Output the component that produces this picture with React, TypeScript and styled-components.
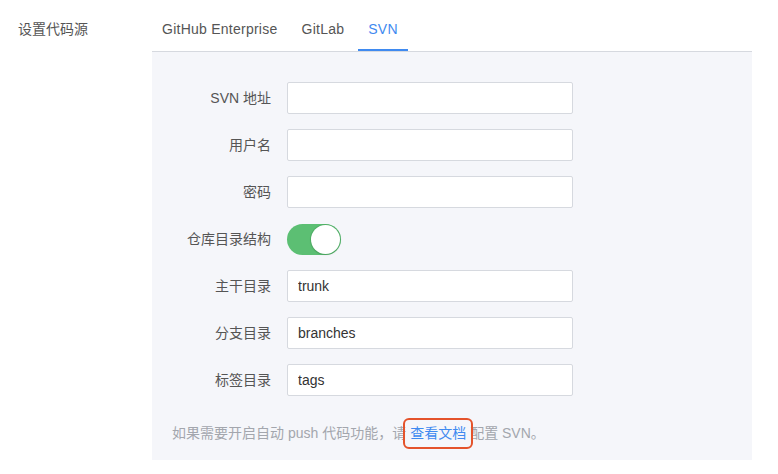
import React from 'react';
import styled, { createGlobalStyle } from 'styled-components';

const GlobalStyle = createGlobalStyle`
  body {
    margin: 0;
    background: #fff;
    font-family: 'Liberation Sans', 'Noto Sans CJK SC', sans-serif;
    font-size: 14px;
    color: #555;
  }
`;

const Page = styled.div`
  display: flex;
  width: 778px;
`;

const SideLabel = styled.div`
  width: 134px;
  padding: 9px 0 0 18px;
  line-height: 40px;
  color: #555;
`;

const Main = styled.div`
  width: 600px;
`;

const TabBar = styled.div`
  display: flex;
  padding-top: 9px;
  border-bottom: 1px solid #d6d9df;
`;

const Tab = styled.div<{ $active?: boolean }>`
  height: 42px;
  box-sizing: border-box;
  padding: 0 10px;
  margin-right: 4px;
  line-height: 40px;
  letter-spacing: 0.25px;
  color: ${(p) => (p.$active ? '#3f8af0' : '#555')};
  border-bottom: 2px solid ${(p) => (p.$active ? '#3f8af0' : 'transparent')};
`;

const Panel = styled.div`
  background: #f5f6fa;
  padding: 30px 20px 17px;
`;

const Form = styled.div`
  display: grid;
  grid-template-columns: 99px 286px;
  column-gap: 16px;
  row-gap: 15px;
`;

const Label = styled.label`
  height: 32px;
  line-height: 32px;
  text-align: right;
  color: #555;
  white-space: nowrap;
`;

const Input = styled.input`
  height: 32px;
  box-sizing: border-box;
  border: 1px solid #d6d9df;
  border-radius: 2px;
  background: #fff;
  padding: 0 10px;
  font: inherit;
  font-size: 14px;
  color: #333;
  outline: none;
`;

const Switch = styled.div<{ $on?: boolean }>`
  align-self: center;
  position: relative;
  width: 54px;
  height: 31px;
  border-radius: 16px;
  background: ${(p) => (p.$on ? '#5cbf73' : '#dcdfe6')};
`;

const Knob = styled.span`
  position: absolute;
  top: 1px;
  right: 1px;
  width: 29px;
  height: 29px;
  border-radius: 50%;
  background: #fff;
  box-shadow: 0 0 0 1px rgba(60, 150, 80, 0.35), 0 1px 2px rgba(0, 0, 0, 0.12);
`;

const Footer = styled.p`
  margin: 27px 0 0;
  height: 20px;
  line-height: 20px;
  color: #a3a6ad;
  white-space: nowrap;
`;

const DocLink = styled.a`
  position: relative;
  display: inline-block;
  margin: -4px -1px;
  padding: 0 5px;
  line-height: 27px;
  color: #3f8af0;
  text-decoration: none;
  border-radius: 4px;
  outline: 2px solid #e4532b;
`;

const fields = [
  { label: 'SVN 地址', value: '' },
  { label: '用户名', value: '' },
  { label: '密码', value: '' },
];

const dirs = [
  { label: '主干目录', value: 'trunk' },
  { label: '分支目录', value: 'branches' },
  { label: '标签目录', value: 'tags' },
];

export default function App() {
  return (
    <>
      <GlobalStyle />
      <Page>
        <SideLabel>设置代码源</SideLabel>
        <Main>
          <TabBar>
            <Tab>GitHub Enterprise</Tab>
            <Tab>GitLab</Tab>
            <Tab $active>SVN</Tab>
          </TabBar>
          <Panel>
            <Form>
              {fields.map((f) => (
                <React.Fragment key={f.label}>
                  <Label>{f.label}</Label>
                  <Input type={f.label === '密码' ? 'password' : 'text'} defaultValue={f.value} />
                </React.Fragment>
              ))}
              <Label>仓库目录结构</Label>
              <Switch $on>
                <Knob />
              </Switch>
              {dirs.map((f) => (
                <React.Fragment key={f.label}>
                  <Label>{f.label}</Label>
                  <Input defaultValue={f.value} />
                </React.Fragment>
              ))}
            </Form>
            <Footer>
              如果需要开启自动 push 代码功能，请<DocLink href="#">查看文档</DocLink>配置 SVN。
            </Footer>
          </Panel>
        </Main>
      </Page>
    </>
  );
}
